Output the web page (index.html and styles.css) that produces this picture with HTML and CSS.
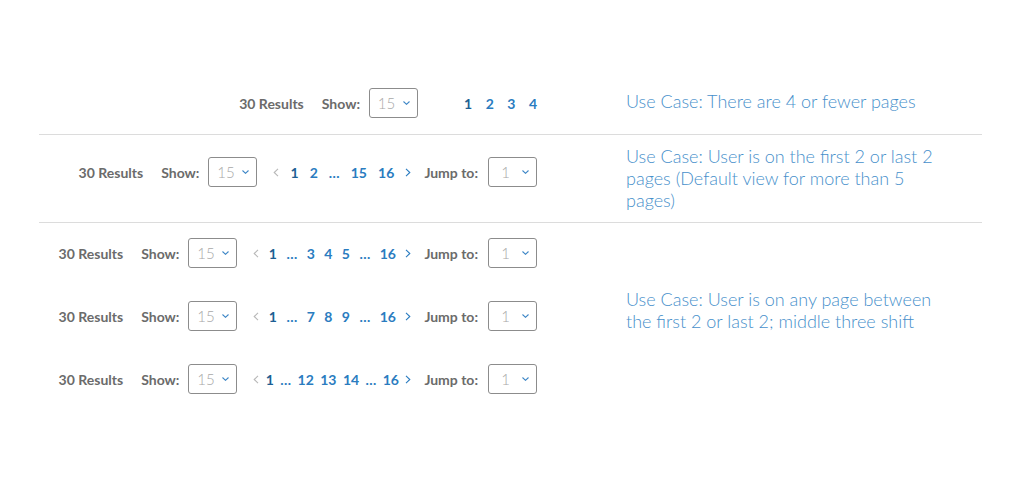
FILE: index.html
```html
<!DOCTYPE html>
<html lang="en">
<head>
<meta charset="utf-8">
<title>Pagination use cases</title>
<link rel="stylesheet" href="styles.css">
</head>
<body>
<div class="page">

  <section class="section s1">
    <div class="controls">
      <div class="row">
        <span class="results">30 Results</span>
        <span class="label">Show:</span>
        <span class="select"><span class="val">15</span><svg class="chev" viewBox="0 0 7 4"><path d="M0.5 0.5 L3.5 3.3 L6.5 0.5"/></svg></span>
        <span class="pages pages-1">
          <a class="pg current">1</a><a class="pg">2</a><a class="pg">3</a><a class="pg">4</a>
        </span>
      </div>
    </div>
    <p class="note">Use Case: There are 4 or fewer pages</p>
  </section>

  <section class="section s2">
    <div class="controls">
      <div class="row">
        <span class="results">30 Results</span>
        <span class="label">Show:</span>
        <span class="select"><span class="val">15</span><svg class="chev" viewBox="0 0 7 4"><path d="M0.5 0.5 L3.5 3.3 L6.5 0.5"/></svg></span>
        <span class="pages pages-2">
          <svg class="arrow prev" viewBox="0 0 6 9"><path d="M5 0.8 L1.2 4.5 L5 8.2"/></svg><a class="pg current">1</a><a class="pg">2</a><span class="pg dots">&hellip;</span><a class="pg">15</a><a class="pg">16</a><svg class="arrow next" viewBox="0 0 6 9"><path d="M1 0.8 L4.8 4.5 L1 8.2"/></svg>
        </span>
        <span class="label jump">Jump to:</span>
        <span class="select"><span class="val">1</span><svg class="chev" viewBox="0 0 7 4"><path d="M0.5 0.5 L3.5 3.3 L6.5 0.5"/></svg></span>
      </div>
    </div>
    <p class="note">Use Case: User is on the first 2 or last 2 pages (Default view for more than 5 pages)</p>
  </section>

  <section class="section s3">
    <div class="controls">
      <div class="row">
        <span class="results">30 Results</span>
        <span class="label">Show:</span>
        <span class="select"><span class="val">15</span><svg class="chev" viewBox="0 0 7 4"><path d="M0.5 0.5 L3.5 3.3 L6.5 0.5"/></svg></span>
        <span class="pages pages-3">
          <svg class="arrow prev" viewBox="0 0 6 9"><path d="M5 0.8 L1.2 4.5 L5 8.2"/></svg><a class="pg current">1</a><span class="pg dots">&hellip;</span><a class="pg">3</a><a class="pg">4</a><a class="pg">5</a><span class="pg dots">&hellip;</span><a class="pg">16</a><svg class="arrow next" viewBox="0 0 6 9"><path d="M1 0.8 L4.8 4.5 L1 8.2"/></svg>
        </span>
        <span class="label jump">Jump to:</span>
        <span class="select"><span class="val">1</span><svg class="chev" viewBox="0 0 7 4"><path d="M0.5 0.5 L3.5 3.3 L6.5 0.5"/></svg></span>
      </div>
      <div class="row">
        <span class="results">30 Results</span>
        <span class="label">Show:</span>
        <span class="select"><span class="val">15</span><svg class="chev" viewBox="0 0 7 4"><path d="M0.5 0.5 L3.5 3.3 L6.5 0.5"/></svg></span>
        <span class="pages pages-3">
          <svg class="arrow prev" viewBox="0 0 6 9"><path d="M5 0.8 L1.2 4.5 L5 8.2"/></svg><a class="pg current">1</a><span class="pg dots">&hellip;</span><a class="pg">7</a><a class="pg">8</a><a class="pg">9</a><span class="pg dots">&hellip;</span><a class="pg">16</a><svg class="arrow next" viewBox="0 0 6 9"><path d="M1 0.8 L4.8 4.5 L1 8.2"/></svg>
        </span>
        <span class="label jump">Jump to:</span>
        <span class="select"><span class="val">1</span><svg class="chev" viewBox="0 0 7 4"><path d="M0.5 0.5 L3.5 3.3 L6.5 0.5"/></svg></span>
      </div>
      <div class="row">
        <span class="results">30 Results</span>
        <span class="label">Show:</span>
        <span class="select"><span class="val">15</span><svg class="chev" viewBox="0 0 7 4"><path d="M0.5 0.5 L3.5 3.3 L6.5 0.5"/></svg></span>
        <span class="pages pages-3">
          <svg class="arrow prev" viewBox="0 0 6 9"><path d="M5 0.8 L1.2 4.5 L5 8.2"/></svg><a class="pg current">1</a><span class="pg dots">&hellip;</span><a class="pg">12</a><a class="pg">13</a><a class="pg">14</a><span class="pg dots">&hellip;</span><a class="pg">16</a><svg class="arrow next" viewBox="0 0 6 9"><path d="M1 0.8 L4.8 4.5 L1 8.2"/></svg>
        </span>
        <span class="label jump">Jump to:</span>
        <span class="select"><span class="val">1</span><svg class="chev" viewBox="0 0 7 4"><path d="M0.5 0.5 L3.5 3.3 L6.5 0.5"/></svg></span>
      </div>
    </div>
    <p class="note">Use Case: User is on any page between the first 2 or last 2; middle three shift</p>
  </section>

</div>
</body>
</html>
```

FILE: styles.css
```css
* { box-sizing: border-box; }

html, body {
  margin: 0;
  padding: 0;
  background: #ffffff;
}

body {
  font-family: "Lato", "Open Sans", "Liberation Sans", sans-serif;
}

.page {
  margin-left: 39px;
  width: 943px;
}

.section {
  display: flex;
  align-items: flex-start;
  border-bottom: 1px solid #dcdcdc;
}

.section.s1 {
  padding-top: 88px;
  padding-bottom: 16px;
}

.section.s2 {
  padding-top: 10px;
  padding-bottom: 11px;
  min-height: 88px;
}

.section.s2 .controls {
  margin-top: 12px;
}

.section.s3 {
  padding-top: 15px;
  border-bottom: none;
}

.controls {
  width: 498px;
  flex: none;
  display: flex;
  flex-direction: column;
  align-items: flex-end;
  gap: 33px;
}

.row {
  display: flex;
  align-items: center;
  height: 30px;
}

.results,
.label {
  font-size: 14px;
  font-weight: 700;
  color: #6b6b6b;
  white-space: nowrap;
}

.results {
  margin-right: 18px;
}

.label {
  margin-right: 9px;
}

.label.jump {
  margin-right: 10px;
}

.select {
  width: 49px;
  height: 30px;
  border: 1px solid #8c8c8c;
  border-radius: 3px;
  display: flex;
  align-items: center;
  padding-left: 1px;
}

.select .val {
  width: 31px;
  text-align: center;
  font-size: 15px;
  font-weight: 300;
  color: #a8a8a8;
}

.select .chev {
  width: 7px;
  height: 4px;
  margin-left: 1px;
  fill: none;
  stroke: #3d86c6;
  stroke-width: 1.1;
}

.pages {
  display: flex;
  align-items: center;
  justify-content: space-between;
}

.pages-1 {
  width: 73px;
  margin-left: 46px;
}

.pages-2 {
  width: 138px;
  margin-left: 16px;
  margin-right: 13px;
}

.pages-3 {
  width: 158px;
  margin-left: 16px;
  margin-right: 13px;
}

.pg {
  font-size: 14px;
  font-weight: 700;
  color: #2a7cc0;
  text-decoration: none;
  cursor: pointer;
}

.pg.current {
  color: #1d5f93;
}

.pg.dots {
  cursor: default;
}

.arrow {
  width: 6px;
  height: 9px;
  fill: none;
  stroke-width: 1.1;
}

.arrow.prev {
  stroke: #b8b8b8;
}

.arrow.next {
  stroke: #2a7cc0;
}

.note {
  margin: 0 0 0 89px;
  width: 322px;
  font-size: 18px;
  font-weight: 300;
  line-height: 22px;
  color: #4790cb;
}

.s1 .note {
  margin-top: 2px;
}

.s3 .note {
  margin-top: 50px;
}
```
